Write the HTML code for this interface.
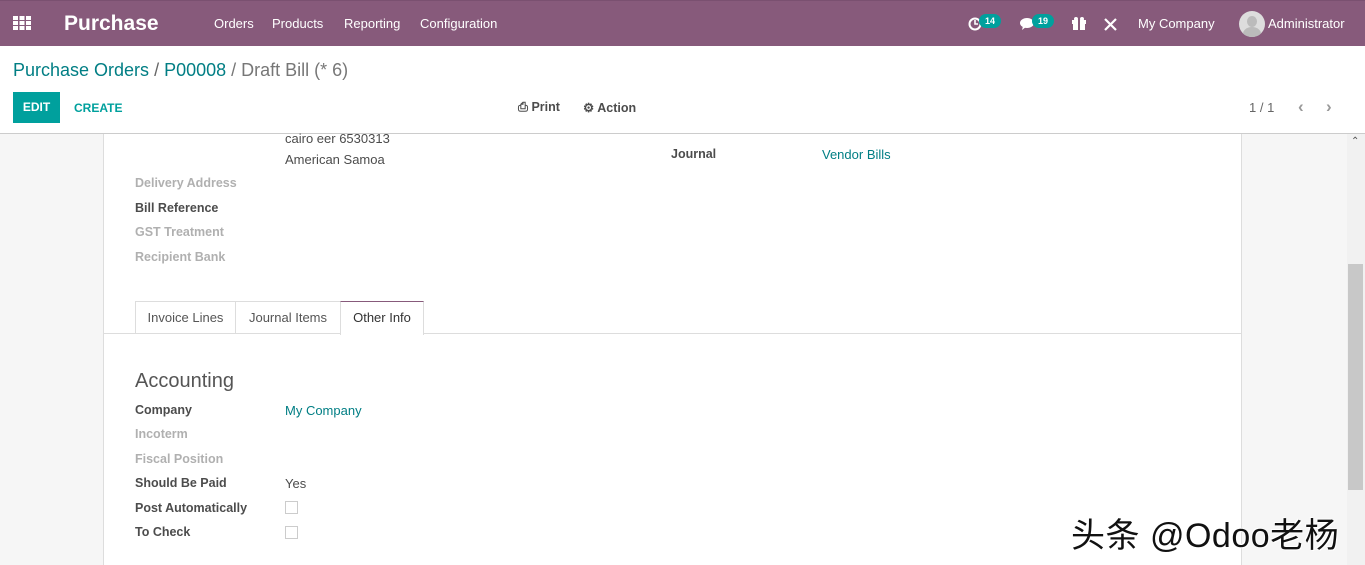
<!DOCTYPE html>
<html><head><meta charset="utf-8"><style>
*{margin:0;padding:0;box-sizing:border-box}
body{width:1365px;height:565px;overflow:hidden;font-family:"Liberation Sans",sans-serif;font-size:13px;color:#4c4c4c;background:#fff;position:relative}
.nav{position:absolute;left:0;top:0;width:1365px;height:46px;background:#875A7B;border-top:1px solid #7a5070;color:#fff}
.nav .t{position:absolute;top:15px;font-size:13px}
.a{position:absolute;white-space:nowrap}
.badge{position:absolute;background:#00A09D;color:#fff;font-size:9px;font-weight:bold;border-radius:8px;height:14px;line-height:14px;padding:0 6px}
.cp{position:absolute;left:0;top:46px;width:1365px;height:88px;background:#fff;border-bottom:1px solid #ccc}
.content{position:absolute;left:0;top:134px;width:1347px;height:431px;background:#f6f6f6}
.sheet{position:absolute;left:103px;top:0;width:1139px;height:431px;background:#fff;border-left:1px solid #ddd;border-right:1px solid #ddd}
.lbl{position:absolute;font-weight:bold;color:#4c4c4c;font-size:12.5px}
.lg{color:#b0b0b0}
.teal{color:#017e84}
.cb{position:absolute;width:13px;height:13px;border:1px solid #ccc;background:#fff}
.tab{position:absolute;top:167px;height:33px;border:1px solid #ddd;border-bottom:none;line-height:31px;text-align:center;font-size:13px;color:#555}
</style></head><body>
<div class="nav">
<svg class="a" style="left:13px;top:15px" width="18" height="14" viewBox="0 0 18 14" fill="#fff"><rect x="0" y="0" width="5" height="4"/><rect x="6.5" y="0" width="5" height="4"/><rect x="13" y="0" width="5" height="4"/><rect x="0" y="5" width="5" height="4"/><rect x="6.5" y="5" width="5" height="4"/><rect x="13" y="5" width="5" height="4"/><rect x="0" y="10" width="5" height="4"/><rect x="6.5" y="10" width="5" height="4"/><rect x="13" y="10" width="5" height="4"/></svg>
<div class="a" style="left:64px;top:11px;font-size:21px;font-weight:bold">Purchase</div>
<div class="t a" style="left:214px">Orders</div>
<div class="t a" style="left:272px">Products</div>
<div class="t a" style="left:344px">Reporting</div>
<div class="t a" style="left:420px">Configuration</div>
<svg class="a" style="left:968px;top:16px" width="14" height="14" viewBox="0 0 14 14"><circle cx="7" cy="7" r="5.5" fill="none" stroke="#fff" stroke-width="2"/><path d="M7 3v4h3" stroke="#fff" stroke-width="1.6" fill="none"/></svg>
<div class="badge" style="left:979px;top:13px">14</div>
<svg class="a" style="left:1020px;top:16px" width="17" height="14" viewBox="0 0 17 14"><ellipse cx="7" cy="6" rx="7" ry="5" fill="#fff"/><path d="M3 9l-1 4 4-3z" fill="#fff"/></svg>
<div class="badge" style="left:1032px;top:13px">19</div>
<svg class="a" style="left:1072px;top:16px" width="14" height="13" viewBox="0 0 14 13" fill="#fff"><rect x="0" y="3" width="14" height="4"/><rect x="1" y="7" width="12" height="6"/><rect x="6" y="3" width="2" height="10" fill="#875A7B"/><circle cx="4" cy="2" r="2"/><circle cx="10" cy="2" r="2"/></svg>
<svg class="a" style="left:1104px;top:17px" width="13" height="13" viewBox="0 0 13 13" stroke="#fff" stroke-width="2.2"><path d="M1 12L12 1M1 1l11 11"/></svg>
<div class="t a" style="left:1138px">My Company</div>
<div class="a" style="left:1239px;top:10px;width:26px;height:26px;border-radius:50%;background:#ddd;overflow:hidden"><div style="position:absolute;left:8px;top:5px;width:10px;height:11px;border-radius:50%;background:#bbb"></div><div style="position:absolute;left:4px;top:16px;width:18px;height:14px;border-radius:50%;background:#bbb"></div></div>
<div class="t a" style="left:1268px">Administrator</div>
</div>
<div class="cp">
<div class="a" style="left:13px;top:14px;font-size:18px;color:#017e84">Purchase Orders <span style="color:#666">/</span> P00008 <span style="color:#777">/ Draft Bill (* 6)</span></div>
<div class="a" style="left:13px;top:46px;width:47px;height:31px;background:#00A09D;color:#fff;font-weight:bold;font-size:12px;line-height:31px;text-align:center">EDIT</div>
<div class="a" style="left:74px;top:55px;color:#00A09D;font-weight:bold;font-size:12px">CREATE</div>
<div class="a" style="left:518px;top:54px;color:#4c4c4c;font-weight:bold;font-size:12.5px">&#9113; Print</div>
<div class="a" style="left:583px;top:54px;color:#4c4c4c;font-weight:bold;font-size:12.5px">&#9881; Action</div>
<div class="a" style="left:1249px;top:54px;color:#666">1 / 1</div>
<div class="a" style="left:1298px;top:51px;color:#999;font-size:17px;font-weight:bold">&#8249;</div>
<div class="a" style="left:1326px;top:51px;color:#999;font-size:17px;font-weight:bold">&#8250;</div>
</div>
<div class="content">
<div class="sheet">
<div class="a" style="left:181px;top:-3px">cairo eer 6530313</div>
<div class="a" style="left:181px;top:18px">American Samoa</div>
<div class="lbl lg" style="left:31px;top:42px">Delivery Address</div>
<div class="lbl" style="left:31px;top:67px">Bill Reference</div>
<div class="lbl lg" style="left:31px;top:91px">GST Treatment</div>
<div class="lbl lg" style="left:31px;top:116px">Recipient Bank</div>
<div class="lbl" style="left:567px;top:13px">Journal</div>
<div class="a teal" style="left:718px;top:13px">Vendor Bills</div>
<div class="a" style="left:0;top:199px;width:1137px;border-top:1px solid #ddd"></div>
<div class="tab" style="left:31px;width:101px">Invoice Lines</div>
<div class="tab" style="left:131px;width:106px">Journal Items</div>
<div class="tab" style="left:236px;width:84px;height:34px;background:#fff;color:#333;border-top-color:#875A7B">Other Info</div>
<div class="a" style="left:31px;top:236px;font-size:20px;color:#555">Accounting</div>
<div class="lbl" style="left:31px;top:269px">Company</div>
<div class="a teal" style="left:181px;top:269px">My Company</div>
<div class="lbl lg" style="left:31px;top:293px">Incoterm</div>
<div class="lbl lg" style="left:31px;top:318px">Fiscal Position</div>
<div class="lbl" style="left:31px;top:342px">Should Be Paid</div>
<div class="a" style="left:181px;top:342px">Yes</div>
<div class="lbl" style="left:31px;top:367px">Post Automatically</div>
<div class="cb" style="left:181px;top:367px"></div>
<div class="lbl" style="left:31px;top:391px">To Check</div>
<div class="cb" style="left:181px;top:392px"></div>
</div>
<div class="a" style="left:1071px;top:374px;font-size:34px;letter-spacing:0.5px;color:#111;font-family:'Liberation Sans','Noto Sans CJK SC',sans-serif;text-shadow:1px 1px 0 #fff,-1px -1px 0 #fff">头条 @Odoo老杨</div>
</div>
<div class="a" style="left:1347px;top:134px;width:18px;height:431px;background:#f1f1f1"></div>
<div class="a" style="left:1348px;top:264px;width:15px;height:226px;background:#c8c8c8"></div>
<div class="a" style="left:1351px;top:136px;font-size:10px;color:#555">&#8963;</div>
</body></html>
